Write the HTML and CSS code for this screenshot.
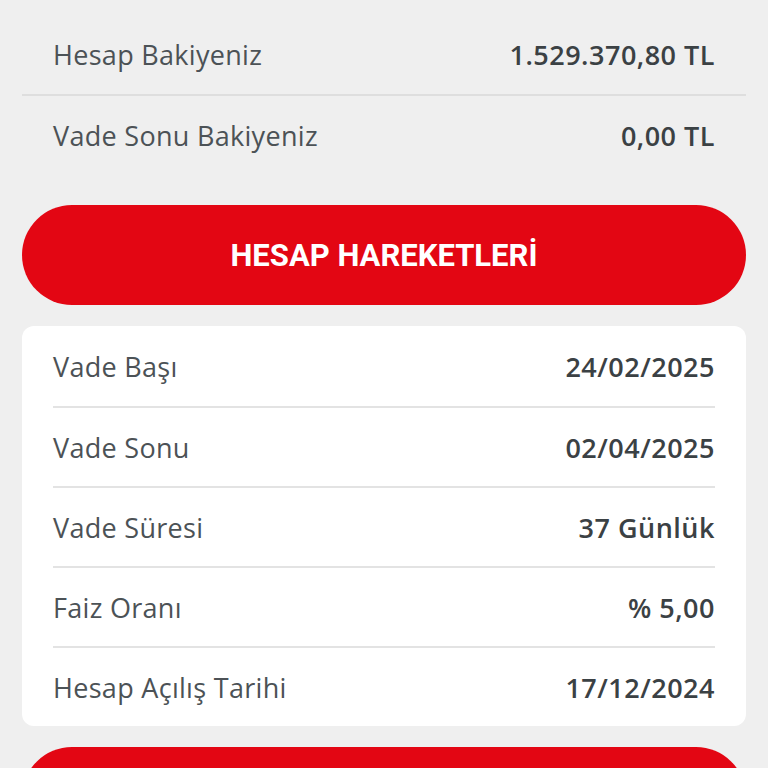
FILE: index.html
```html
<!DOCTYPE html>
<html lang="tr">
<head>
<meta charset="utf-8">
<link rel="stylesheet" href="styles.css">
</head>
<body>
<div class="page">
  <section class="summary">
    <div class="row"><span class="label">Hesap Bakiyeniz</span><span class="value">1.529.370,80 TL</span></div>
    <div class="row"><span class="label">Vade Sonu Bakiyeniz</span><span class="value">0,00 TL</span></div>
  </section>
  <button class="btn">HESAP HAREKETLERİ</button>
  <section class="card">
    <div class="row"><span class="label">Vade Başı</span><span class="value">24/02/2025</span></div>
    <div class="row"><span class="label">Vade Sonu</span><span class="value">02/04/2025</span></div>
    <div class="row"><span class="label">Vade Süresi</span><span class="value">37 Günlük</span></div>
    <div class="row"><span class="label">Faiz Oranı</span><span class="value">% 5,00</span></div>
    <div class="row"><span class="label">Hesap Açılış Tarihi</span><span class="value">17/12/2024</span></div>
  </section>
  <button class="btn"></button>
</div>
</body>
</html>
```
FILE: styles.css
```css
html, body {
  margin: 0;
  padding: 0;
  background: #efefef;
  overflow: hidden;
}
.page {
  width: 768px;
  height: 768px;
  box-sizing: border-box;
  padding: 14px 22px 0;
  display: flex;
  flex-direction: column;
  gap: 21px;
  font-family: "Open Sans", "Noto Sans", sans-serif;
  color: #474d51;
  overflow: hidden;
}
.summary {
  display: flex;
  flex-direction: column;
  margin-bottom: 10px;
}
.summary .row {
  padding: 0 31px;
}
.summary .row + .row {
  border-top: 2px solid #dedede;
}
.row {
  height: 80px;
  display: flex;
  align-items: center;
  justify-content: space-between;
  box-sizing: border-box;
}
.label {
  font-size: 27px;
  font-weight: 400;
  letter-spacing: 0.3px;
  color: #4c5256;
}
.value {
  font-size: 27px;
  font-weight: 600;
  letter-spacing: 0.5px;
  color: #3b4144;
}
.btn {
  flex: none;
  height: 100px;
  width: 100%;
  border: none;
  border-radius: 50px;
  background: #e30613;
  color: #fff;
  font-family: "Roboto", sans-serif;
  font-weight: 700;
  font-size: 31px;
  letter-spacing: 0;
  padding: 0;
}
.card {
  background: #fff;
  border-radius: 12px;
  padding: 0 31px;
  display: flex;
  flex-direction: column;
}
.card .row + .row {
  border-top: 2px solid #e3e3e3;
}
```
